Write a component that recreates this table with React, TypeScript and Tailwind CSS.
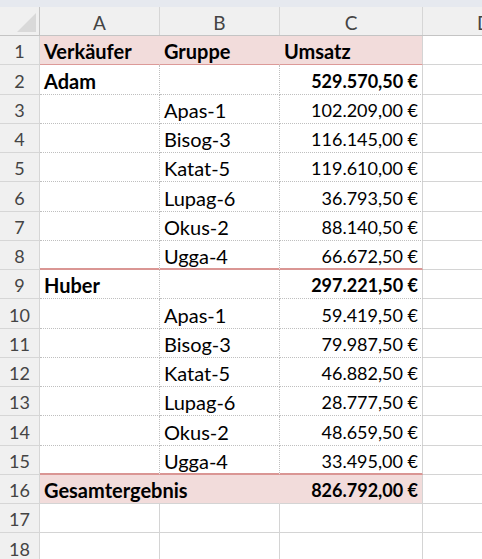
import React from "react";

type Row = {
  n: number;
  a?: string;
  b?: string;
  c?: string;
  bold?: boolean;
  kind: "head" | "body" | "total" | "empty";
  thick?: boolean;
  h: number;
};

const rows: Row[] = [
  { n: 1, a: "Verkäufer", b: "Gruppe", c: "Umsatz", bold: true, kind: "head", h: 29 },
  { n: 2, a: "Adam", c: "529.570,50 €", bold: true, kind: "body", h: 30 },
  { n: 3, b: "Apas-1", c: "102.209,00 €", kind: "body", h: 29 },
  { n: 4, b: "Bisog-3", c: "116.145,00 €", kind: "body", h: 29 },
  { n: 5, b: "Katat-5", c: "119.610,00 €", kind: "body", h: 29 },
  { n: 6, b: "Lupag-6", c: "36.793,50 €", kind: "body", h: 30 },
  { n: 7, b: "Okus-2", c: "88.140,50 €", kind: "body", h: 29 },
  { n: 8, b: "Ugga-4", c: "66.672,50 €", kind: "body", thick: true, h: 29 },
  { n: 9, a: "Huber", c: "297.221,50 €", bold: true, kind: "body", h: 29 },
  { n: 10, b: "Apas-1", c: "59.419,50 €", kind: "body", h: 30 },
  { n: 11, b: "Bisog-3", c: "79.987,50 €", kind: "body", h: 29 },
  { n: 12, b: "Katat-5", c: "46.882,50 €", kind: "body", h: 29 },
  { n: 13, b: "Lupag-6", c: "28.777,50 €", kind: "body", h: 29 },
  { n: 14, b: "Okus-2", c: "48.659,50 €", kind: "body", h: 30 },
  { n: 15, b: "Ugga-4", c: "33.495,00 €", kind: "body", thick: true, h: 29 },
  { n: 16, a: "Gesamtergebnis", c: "826.792,00 €", bold: true, kind: "total", h: 29 },
  { n: 17, kind: "empty", h: 29 },
  { n: 18, kind: "empty", h: 30 },
];

function SheetRow({ r }: { r: Row }) {
  const pink = r.kind === "head" || r.kind === "total";
  const weight = r.bold ? "font-bold" : "font-normal";
  let bottom = "border-b border-[#d4d4d4]";
  let inner = "border-r border-[#d4d4d4]";
  if (r.kind === "head") {
    bottom = "border-b border-b-[#dc9a98]";
    inner = "border-r border-r-[#f2dcdb]";
  } else if (r.kind === "total") {
    bottom = "border-b border-b-[#d4d4d4]";
    inner = "border-r border-r-[#f2dcdb]";
  } else if (r.kind === "body") {
    bottom = r.thick
      ? "border-b-2 border-b-[#da9694] [border-bottom-style:solid]"
      : "border-b border-b-[#bfbfbf] [border-bottom-style:dotted]";
    inner = "border-r border-r-[#bfbfbf] [border-right-style:dotted]";
  }
  const bg = pink ? "bg-[#f2dcdb]" : "bg-white";
  const textCell = "flex items-center whitespace-nowrap pl-[4px] pt-[2px] text-[20px]";
  return (
    <div
      className="grid grid-cols-[40px_120px_120px_143px_1fr]"
      style={{ height: r.h }}
    >
      <div className="flex items-center justify-center border-r border-b border-[#d6d6d6] bg-[#f0f0f0] pt-[2px] text-[18px] text-[#444444]">
        {r.n}
      </div>
      {r.kind === "total" ? (
        <div className={`col-span-2 ${textCell} ${bg} ${bottom} ${inner} ${weight}`}>
          {r.a}
        </div>
      ) : (
        <>
          <div className={`${textCell} ${bg} ${bottom} ${inner} ${weight}`}>
            {r.a ?? ""}
          </div>
          <div className={`${textCell} ${bg} ${bottom} ${inner} ${weight}`}>
            {r.b ?? ""}
          </div>
        </>
      )}
      {r.kind === "head" ? (
        <div className={`${textCell} ${bg} ${bottom} border-r border-r-[#d4d4d4] ${weight}`}>
          {r.c}
        </div>
      ) : (
        <div
          className={`flex items-center justify-end whitespace-nowrap pr-[4px] pt-[2px] text-[18px] ${bg} ${bottom} border-r border-r-[#d4d4d4] [border-right-style:solid] ${weight}`}
        >
          {r.c ?? ""}
        </div>
      )}
      <div className="border-b border-[#d4d4d4] bg-white"></div>
    </div>
  );
}

export default function App() {
  return (
    <div
      className="h-[559px] w-[482px] overflow-hidden bg-white text-[18px] leading-none text-black"
      style={{ fontFamily: "Lato, 'Noto Sans', sans-serif" }}
    >
      <div className="h-[7px] bg-[#e6e9ef]"></div>
      <div className="grid h-[29px] grid-cols-[40px_120px_120px_143px_1fr] border-b border-[#c4c4c4] bg-[#f0f0f0] text-[19px] text-[#444444]">
        <div className="relative border-r border-[#c4c4c4]">
          <svg
            className="absolute left-0 top-0"
            width="40"
            height="28"
            viewBox="0 0 40 28"
          >
            <polygon points="36,6 36,25 17,25" fill="#d9d9d9" />
          </svg>
        </div>
        <div className="flex items-center justify-center border-r border-[#d6d6d6] pt-[2px]">A</div>
        <div className="flex items-center justify-center border-r border-[#d6d6d6] pt-[2px]">B</div>
        <div className="flex items-center justify-center border-r border-[#d6d6d6] pt-[2px]">C</div>
        <div className="flex items-center overflow-hidden pl-[54px] pt-[2px]">D</div>
      </div>
      {rows.map((r) => (
        <SheetRow key={r.n} r={r} />
      ))}
    </div>
  );
}
